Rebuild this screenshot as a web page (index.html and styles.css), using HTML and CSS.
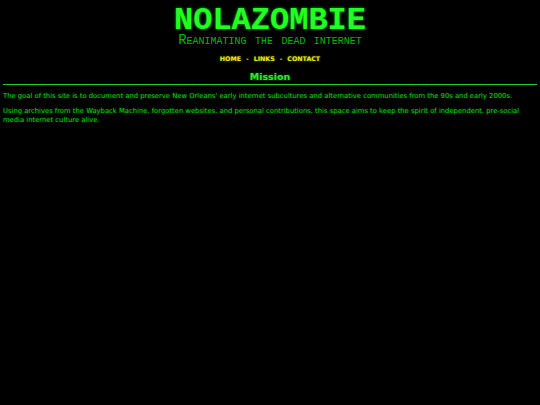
FILE: index.html
```html
<!DOCTYPE html>
<html>
<head>
<meta charset="utf-8">
<title>NOLAZOMBIE</title>
<link rel="stylesheet" href="styles.css">
</head>
<body>
<header class="masthead">
  <h1 class="title">NOLAZOMBIE</h1>
  <div class="tagline">Reanimating the dead internet</div>
</header>
<nav class="nav">
  <a href="#">HOME</a><span class="sep">-</span><a href="#">LINKS</a><span class="sep">-</span><a href="#">CONTACT</a>
</nav>
<h2 class="section-title">Mission</h2>
<hr class="rule">
<main class="content">
  <p>The goal of this site is to document and preserve New Orleans' early internet subcultures and alternative communities from the 90s and early 2000s.</p>
  <p>Using archives from the Wayback Machine, forgotten websites, and personal contributions, this space aims to keep the spirit of independent, pre-social media internet culture alive.</p>
</main>
</body>
</html>
```
FILE: styles.css
```css
html, body {
  background: #000;
}
body {
  margin: 0;
  padding: 0 3px;
  font-family: "DejaVu Sans", Verdana, sans-serif;
  color: #00d000;
}
.masthead {
  text-align: center;
  padding-top: 7px;
}
.title {
  margin: 0;
  font-family: "Liberation Mono", "Courier New", monospace;
  font-weight: bold;
  font-size: 32px;
  line-height: 28px;
  color: #22ff22;
  text-shadow: 0 0 3px #00aa00;
}
.tagline {
  font-family: "Liberation Mono", "Courier New", monospace;
  font-variant: small-caps;
  font-size: 14px;
  line-height: 10px;
  color: #00b800;
}
.nav {
  text-align: center;
  margin-top: 10px;
  font-size: 6.3px;
  font-weight: bold;
  line-height: 8px;
}
.nav a {
  color: #e8e800;
  text-decoration: none;
  text-shadow: 0 0 2px #888800;
}
.sep {
  color: #e8e800;
  margin: 0 5px;
}
.section-title {
  text-align: center;
  margin: 8px 0 0;
  font-size: 9.5px;
  line-height: 11px;
  font-weight: bold;
  color: #22ee22;
  text-shadow: 0 0 2px #008800;
}
.rule {
  border: 0;
  border-top: 1px solid #22cc22;
  margin: 2px 0 0;
  height: 0;
}
.content {
  font-size: 6.8px;
  line-height: 9px;
}
.content p {
  margin: 7px 0 0;
  text-shadow: 0 0 2px #006600;
}
.content p + p {
  margin-top: 6px;
}
```
